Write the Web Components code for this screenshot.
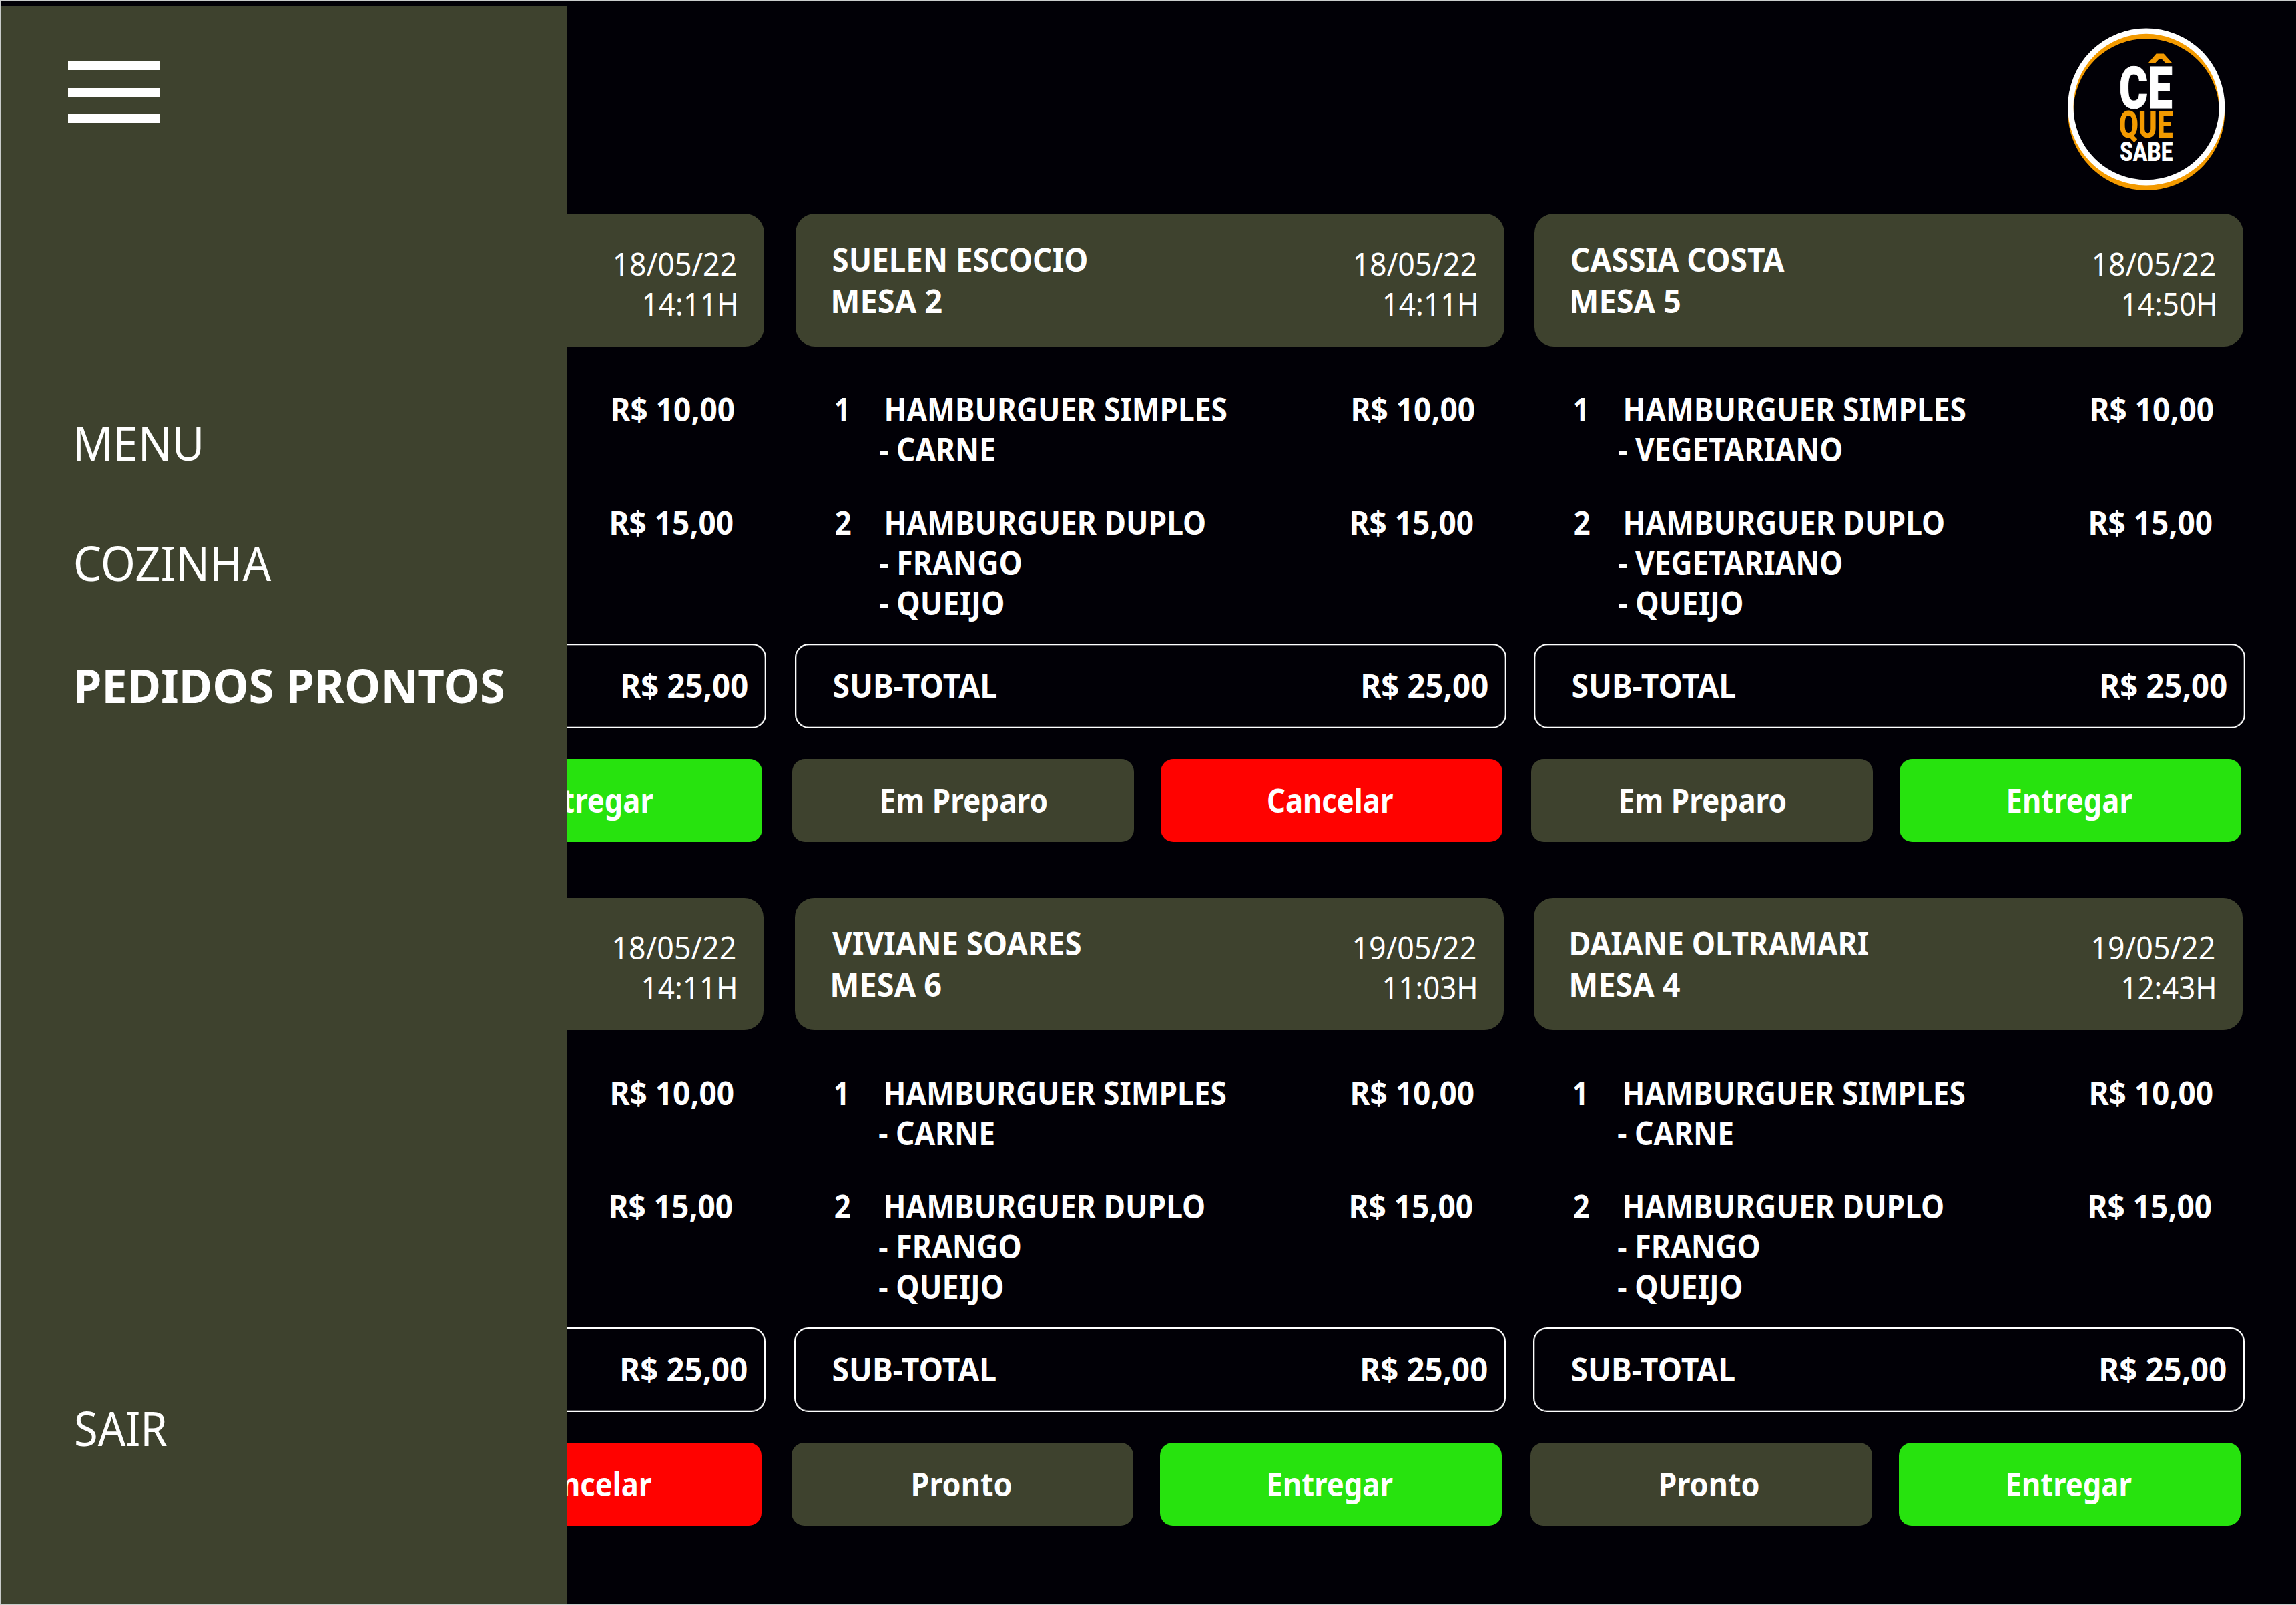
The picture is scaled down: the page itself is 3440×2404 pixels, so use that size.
<!DOCTYPE html>
<html lang="pt-BR">
<head>
<meta charset="utf-8">
<title>Cê Que Sabe - Pedidos Prontos</title>
<style>
  html, body { margin: 0; padding: 0; background: #010006; }
  body { width: 3440px; height: 2404px; overflow: hidden; font-family: "Noto Sans", sans-serif; color: #fff; }
</style>
</head>
<body>
<orders-app></orders-app>
<script>
const pen = document.createElement('canvas').getContext('2d');
const CAP = { 'Noto Sans': 0.714, 'Roboto': 0.711 };

/* One line of text whose box is its capital height (h) by its ink width (w). */
class FitText extends HTMLElement {
  connectedCallback() {
    if (this.shadowRoot) return;
    const w = +this.getAttribute('w'), h = +(this.getAttribute('h') || 34);
    const weight = this.getAttribute('weight') || 700;
    const face = this.getAttribute('face') || 'Noto Sans';
    const size = h / CAP[face];
    /* Measured at ten times the size, so that rounding does not move the edges. */
    pen.font = `${weight} ${size * 10}px "${face}"`;
    const m = pen.measureText(this.textContent.trim());
    const left = m.actualBoundingBoxLeft / 10, right = m.actualBoundingBoxRight / 10;
    const sx = w / (right + left);
    const asc = m.fontBoundingBoxAscent / 10, desc = m.fontBoundingBoxDescent / 10;
    const nudge = h === 34 ? 1 : 0;
    const dy = h - ((h - asc - desc) / 2 + asc) + nudge;
    const dx = left * sx;
    this.attachShadow({ mode: 'open' }).innerHTML = `
      <style>
        :host { display: block; flex: none; width: ${w}px; height: ${h}px; }
        span { display: inline-block; white-space: nowrap; font: ${weight} ${size}px/${h}px "${face}", sans-serif;
          transform-origin: 0 0; transform: translate(${dx}px, ${dy}px) scaleX(${sx}); vertical-align: top; }
      </style><span><slot></slot></span>`;
  }
}

class BrandBadge extends HTMLElement {
  connectedCallback() {
    this.attachShadow({ mode: 'open' }).innerHTML = `
      <style>
        :host { display: grid; width: 236px; height: 244px; }
        svg, .words { grid-area: 1 / 1; }
        .words { display: flex; flex-direction: column; padding: 58px 0 0 79px; }
        .ce { clip-path: inset(-1px -2px -2px -2px); -webkit-text-stroke: 1px #fff; }
        .que { color: #f39a00; margin: 5.500px 0 0 -0.500px; }
        .sabe { margin-top: 6px; }
      </style>
      <svg width="236" height="244" viewBox="0 0 236 244" fill="none">
        <circle cx="117.7" cy="125.3" r="113.4" stroke="#f39a00" stroke-width="8.4"/>
        <circle cx="117.7" cy="118" r="113.4" stroke="#fff" stroke-width="8.4"/>
        <path d="M121 52 L132.6 38.6 H143.8 L156 52 H146 L141 46.7 H136.500 L131.500 52 Z" fill="#f39a00"/>
      </svg>
      <div class="words">
        <fit-text class="ce" face="Roboto" weight="900" w="77" h="62">CÊ</fit-text>
        <fit-text class="que" face="Roboto" weight="900" w="79" h="39">QUE</fit-text>
        <fit-text class="sabe" face="Roboto" weight="900" w="78" h="29">SABE</fit-text>
      </div>`;
  }
}

class MenuToggle extends HTMLElement {
  connectedCallback() {
    this.attachShadow({ mode: 'open' }).innerHTML = `
      <style>
        :host { display: flex; flex-direction: column; gap: 26.7px; width: 138px; }
        i { height: 12.8px; background: #fff; }
      </style><i></i><i></i><i></i>`;
  }
}

class SideDrawer extends HTMLElement {
  connectedCallback() {
    this.attachShadow({ mode: 'open' }).innerHTML = `
      <style>
        :host { display: flex; flex-direction: column; box-sizing: border-box; padding: 83.3px 0 0 100px; background: #3e422e; }
        nav { display: flex; flex-direction: column; padding: 455px 0 0 12px; }
        nav fit-text { margin-left: 1px; }
        nav .second { margin-top: 129px; margin-left: -1px; }
        .third { margin-top: 132.500px; }
        .exit { margin: 1062px 0 0 12px; }
      </style>
      <menu-toggle></menu-toggle>
      <nav>
        <fit-text h="51" w="185.500" weight="400">MENU</fit-text>
        <fit-text class="second" h="51" w="293.500" weight="400">COZINHA</fit-text>
        <fit-text class="third" h="50.500" w="639.500">PEDIDOS PRONTOS</fit-text>
      </nav>
      <fit-text class="exit" h="51" w="136" weight="400">SAIR</fit-text>`;
  }
}

class OrderItem extends HTMLElement {
  connectedCallback() {
    this.attachShadow({ mode: 'open' }).innerHTML = `
      <style>
        :host { display: flex; box-sizing: border-box; padding: 0 48px 0 65px; }
        .qty { width: 76px; }
        .body { flex: 1; }
        .opts { display: flex; flex-direction: column; gap: 26px; margin: 26px 0 0 -10px; }
      </style>
      <div class="qty"><slot name="qty"></slot></div>
      <div class="body"><slot></slot><div class="opts"><slot name="opt"></slot></div></div>
      <slot name="price"></slot>`;
  }
}

class ActionButton extends HTMLElement {
  connectedCallback() {
    const bg = { olive: '#3e422e', red: '#ff0200', green: '#27e30e' }[this.getAttribute('tone')];
    const dx = +(this.getAttribute('dx') || 0);
    this.attachShadow({ mode: 'open' }).innerHTML = `
      <style>
        :host { display: flex; justify-content: center; box-sizing: border-box; width: 512px; height: 124px;
          padding-top: 45.500px; padding-left: ${dx > 0 ? 2 * dx : 0}px; padding-right: ${dx < 0 ? -2 * dx : 0}px;
          border-radius: 19px; background: ${bg}; }
      </style><slot></slot>`;
  }
}

class OrderCard extends HTMLElement {
  connectedCallback() {
    this.attachShadow({ mode: 'open' }).innerHTML = `
      <style>
        :host { display: flex; flex-direction: column; width: 1070px; }
        header { display: flex; justify-content: space-between; box-sizing: border-box; height: 198.500px;
          margin: 0 3px 0 5px; padding: 51.500px 42.500px 0 55.500px; border-radius: 29px; background: #3e422e; }
        .who { display: flex; flex-direction: column; gap: 28px; }
        .when { display: flex; flex-direction: column; align-items: flex-end; gap: 26px; padding-top: 6px; }
        .items { display: flex; flex-direction: column; box-sizing: border-box; height: 445px; padding-top: 77px; }
        .total { display: flex; justify-content: space-between; box-sizing: border-box; height: 127px; margin-left: 4px;
          padding: 44.500px 26.500px 0 55.500px; border: 2px solid #fff; border-radius: 21px;
          box-shadow: inset 0 0 0 0.500px rgba(255, 255, 255, 0.6); }
        .actions { display: flex; justify-content: flex-end; gap: 40px; padding: 46px 6px 0 0; }
      </style>
      <header>
        <div class="who"><slot name="who"></slot></div>
        <div class="when"><slot name="when"></slot></div>
      </header>
      <div class="items"><slot></slot></div>
      <div class="total"><div><slot name="label"></slot></div><slot name="total"></slot></div>
      <div class="actions"><slot name="action"></slot></div>`;
  }
}

const WIDTHS = {
  'HAMBURGUER SIMPLES': 509.5, 'HAMBURGUER DUPLO': 477.5, '- CARNE': 172, '- FRANGO': 212, '- QUEIJO': 185.5,
  '- VEGETARIANO': 334.5, '1': 15.5, '2': 22.5, 'Em Preparo': 247, 'Cancelar': 187, 'Entregar': 185.5, 'Pronto': 146.5
};
const ORDERS = [
  { when: [['18/05/22', 181.5], ['14:11H', 138]], actions: [['green', 'Entregar']] },
  { who: [['SUELEN ESCOCIO', 380.5], ['MESA 2', 163]], when: [['18/05/22', 181.5], ['14:11H', 138]],
    opts: [['- CARNE'], ['- FRANGO', '- QUEIJO']], actions: [['olive', 'Em Preparo', 1.5], ['red', 'Cancelar', -1.5]] },
  { who: [['CASSIA COSTA', 319], ['MESA 5', 162]], when: [['18/05/22', 181.5], ['14:50H', 138]],
    opts: [['- VEGETARIANO'], ['- VEGETARIANO', '- QUEIJO']], actions: [['olive', 'Em Preparo', 1.5], ['green', 'Entregar']] },
  { when: [['18/05/22', 181.5], ['14:11H', 138]], actions: [['red', 'Cancelar', -2.5]] },
  { who: [['VIVIANE SOARES', 372], ['MESA 6', 163]], when: [['19/05/22', 181.5], ['11:03H', 137]],
    opts: [['- CARNE'], ['- FRANGO', '- QUEIJO']], actions: [['olive', 'Pronto', -0.5], ['green', 'Entregar']] },
  { who: [['DAIANE OLTRAMARI', 445], ['MESA 4', 163]], when: [['19/05/22', 181.5], ['12:43H', 137]],
    opts: [['- CARNE'], ['- FRANGO', '- QUEIJO']], actions: [['olive', 'Pronto', 12], ['green', 'Entregar']] }
];
const fit = (text, w, attrs = '') => `<fit-text w="${w}" ${attrs}>${text}</fit-text>`;

function cardMarkup(o, i) {
  const names = ['HAMBURGUER SIMPLES', 'HAMBURGUER DUPLO'];
  const prices = ['R$ 10,00', 'R$ 15,00'];
  /* Cards of the first column are covered by the open drawer up to their right-hand part. */
  const items = names.map((name, n) => `
    <order-item class="${n ? 'item2' : 'item1'}">
      ${o.opts ? fit(n + 1, WIDTHS[n + 1], 'slot="qty"') + fit(name, WIDTHS[name]) : ''}
      ${o.opts ? o.opts[n].map(t => fit(t, WIDTHS[t], 'slot="opt"')).join('') : ''}
      ${fit(prices[n], 182, 'slot="price"')}
    </order-item>`).join('');
  return `<order-card class="${i > 2 ? 'lower' : ''}">
    ${(o.who || []).map(([t, w]) => fit(t, w, 'slot="who"')).join('')}
    ${o.when.map(([t, w]) => fit(t, w, 'slot="when" weight="400"')).join('')}
    ${items}
    ${o.who ? fit('SUB-TOTAL', 244, 'slot="label"') : ''}
    ${fit('R$ 25,00', 187, 'slot="total"')}
    ${o.actions.map(([tone, t, dx]) => `<action-button slot="action" tone="${tone}" dx="${dx || 0}">${fit(t, WIDTHS[t])}</action-button>`).join('')}
  </order-card>`;
}

class OrdersApp extends HTMLElement {
  connectedCallback() {
    this.attachShadow({ mode: 'open' }).innerHTML = `
      <style>
        :host { display: block; position: relative; box-sizing: border-box; width: 3440px; height: 2404px; overflow: hidden;
          background: #010006; border: solid #c9cccb; border-width: 1px 0 1px 1px; }
        .top { display: flex; justify-content: flex-end; height: 278.500px; padding: 40.500px 106.500px 0 0; }
        .board { display: grid; grid-template-columns: 1109px 1107px 1070px; grid-template-rows: 1024.500px 940px; padding-left: 77px; }
        .item1 { height: 170px; }
        .item2 { padding-right: 50px; }
        .lower { margin-left: -1px; }
        side-drawer { position: absolute; left: 1px; top: 8px; width: 846.500px; height: 2393px; }
      </style>
      <div class="top"><brand-badge></brand-badge></div>
      <main class="board">${ORDERS.map(cardMarkup).join('')}</main>
      <side-drawer></side-drawer>`;
  }
}

customElements.define('fit-text', FitText);
customElements.define('brand-badge', BrandBadge);
customElements.define('menu-toggle', MenuToggle);
customElements.define('side-drawer', SideDrawer);
customElements.define('order-item', OrderItem);
customElements.define('action-button', ActionButton);
customElements.define('order-card', OrderCard);
customElements.define('orders-app', OrdersApp);
</script>
</body>
</html>
